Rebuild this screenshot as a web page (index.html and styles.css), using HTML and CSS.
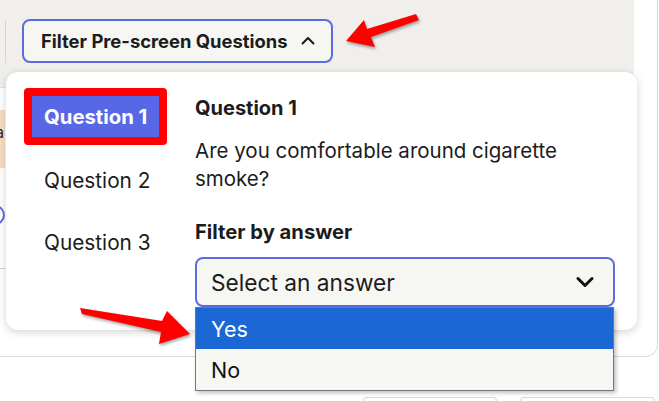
FILE: index.html
```html
<!DOCTYPE html>
<html>
<head>
<meta charset="utf-8">
<link rel="stylesheet" href="styles.css">
</head>
<body>
<div class="page">
  <div class="card">
    <div class="card-head">
      <div class="sep"></div>
      <button class="filter-btn">
        <span>Filter Pre-screen Questions</span>
        <svg class="chev-up" width="14" height="9" viewBox="0 0 14 9"><path d="M1.5 7.5 L7 2 L12.5 7.5" fill="none" stroke="#1a1a1a" stroke-width="2" stroke-linecap="round" stroke-linejoin="round"/></svg>
      </button>
    </div>
    <div class="card-body">
      <div class="peach"><span>a</span></div>
      <div class="radio"></div>
      <div class="rule"></div>
    </div>
  </div>
  <div class="pills"><div class="pill pill-a"></div><div class="pill pill-b"></div></div>

  <div class="popover">
    <nav class="qnav">
      <div class="qnav-active"><span>Question 1</span></div>
      <div class="qnav-item">Question 2</div>
      <div class="qnav-item">Question 3</div>
    </nav>
    <section class="qbody">
      <h3 class="qtitle">Question 1</h3>
      <p class="qtext">Are you comfortable around cigarette smoke?</p>
      <h4 class="qlabel">Filter by answer</h4>
      <div class="select-wrap">
        <div class="select">
          <span>Select an answer</span>
          <svg width="18" height="12" viewBox="0 0 18 12"><path d="M2 2.5 L9 9.5 L16 2.5" fill="none" stroke="#111" stroke-width="3" stroke-linecap="round" stroke-linejoin="round"/></svg>
        </div>
        <ul class="options">
          <li class="opt opt-on">Yes</li>
          <li class="opt">No</li>
        </ul>
      </div>
    </section>
  </div>

  <svg class="arrow" width="659" height="401" viewBox="0 0 659 401">
    <polygon points="416,14 367,29 364,20 346,41 375,47 371,37 419,20" fill="#ff0000"/>
    <polygon points="80,308 162,321 167,311 190,334 159,344 161,332 82,314" fill="#ff0000"/>
  </svg>
</div>
</body>
</html>
```
FILE: styles.css
```css
* { box-sizing: border-box; }
html, body { margin: 0; padding: 0; background: #ffffff; }
body {
  font-family: "Inter", "Noto Sans", sans-serif;
  color: #1c1c1c;
  width: 659px;
  height: 401px;
  overflow: hidden;
}
.page {
  position: relative;
  display: flow-root;
  width: 659px;
  height: 401px;
  overflow: hidden;
}

.card {
  margin: -12px 0 0 -12px;
  width: 670px;
  height: 369px;
  border: 1px solid #d9d9d7;
  border-radius: 12px;
  overflow: hidden;
  background: #fff;
}
.card-head {
  width: 645px;
  height: 99px;
  background: #f0efeb;
  border-top-right-radius: 12px;
  border-bottom: 1px solid #e3e2de;
  display: flex;
  align-items: flex-start;
  padding: 30px 0 0 16px;
  gap: 16px;
}
.sep { width: 1px; height: 43px; background: #d6d5d1; margin-top: 1px; }
.filter-btn {
  width: 311px;
  height: 44px;
  border: 2px solid #5d6be3;
  border-radius: 8px;
  background: #f6f6f2;
  display: flex;
  align-items: center;
  padding: 0 17px;
  gap: 13px;
  font-family: inherit;
  font-weight: 700;
  font-size: 18.4px;
  color: #1c1c1c;
  white-space: nowrap;
}
.chev-up { margin-top: -2px; flex: none; }

.card-body { padding-top: 22px; }
.peach {
  width: 16px;
  height: 58px;
  background: #f8dcc2;
  text-align: right;
  padding-right: 1px;
  font-size: 15px;
  line-height: 46px;
  overflow: hidden;
}
.radio {
  width: 20px; height: 20px;
  margin: 37px 0 0 -4px;
  border: 2px solid #5d6be3;
  border-radius: 50%;
}
.rule { height: 1px; background: #d6d6d6; margin-top: 43px; width: 400px; }

.pills { display: flex; gap: 23px; padding: 40px 0 0 363px; }
.pill { width: 134px; height: 4px; border: 1px solid #d9d9d7; border-bottom: none; border-radius: 12px 12px 0 0; }
.pill-b { width: 135px; }

.popover {
  position: absolute;
  left: 6px;
  top: 72px;
  width: 631px;
  height: 258px;
  background: #fff;
  border-radius: 12px;
  box-shadow: 0 2px 8px rgba(0,0,0,0.18);
  display: flex;
  gap: 28px;
  padding: 16px 22px 0 18px;
}
.qnav { width: 143px; flex: none; }
.qnav-active {
  width: 143px;
  height: 57px;
  border: 8px solid #ff0000;
  border-radius: 4px;
  margin-bottom: 4px;
}
.qnav-active span {
  display: flex;
  align-items: center;
  height: 100%;
  background: #5867e6;
  color: #fff;
  font-weight: 700;
  font-size: 20.3px;
  padding-left: 12px;
  white-space: nowrap;
}
.qnav-item {
  height: 62px;
  display: flex;
  align-items: center;
  padding-left: 20px;
  font-size: 20.8px;
  color: #1c1c1c;
}
.qbody { width: 420px; padding-top: 8px; }
.qtitle { margin: 0; font-size: 20px; font-weight: 700; line-height: 24px; }
.qtext { margin: 17px 0 0; font-size: 20.5px; line-height: 28px; width: 410px; }
.qlabel { margin: 27px 0 0; font-size: 20.2px; font-weight: 700; line-height: 24px; }
.select-wrap { position: relative; margin-top: 13px; }
.select {
  height: 50px;
  border: 2px solid #5d6be3;
  border-radius: 8px;
  background: #f6f6f2;
  display: flex;
  align-items: center;
  justify-content: space-between;
  padding: 0 19px 0 14px;
  font-size: 22.7px;
}
.options {
  position: absolute;
  left: 0; right: 1px;
  top: 50px;
  margin: 0; padding: 0;
  list-style: none;
  background: #f6f6f2;
  border: 1px solid #767676;
  box-shadow: 2px 2px 4px rgba(0,0,0,0.25);
}
.opt {
  height: 41px;
  display: flex;
  align-items: center;
  padding-left: 15px;
  font-size: 21.5px;
  color: #111;
}
.opt-on { background: #1b67d3; color: #fff; }

.arrow {
  position: absolute;
  left: 0; top: 0;
  pointer-events: none;
  filter: drop-shadow(1px 2px 1.5px rgba(0,0,0,0.35));
}
```
